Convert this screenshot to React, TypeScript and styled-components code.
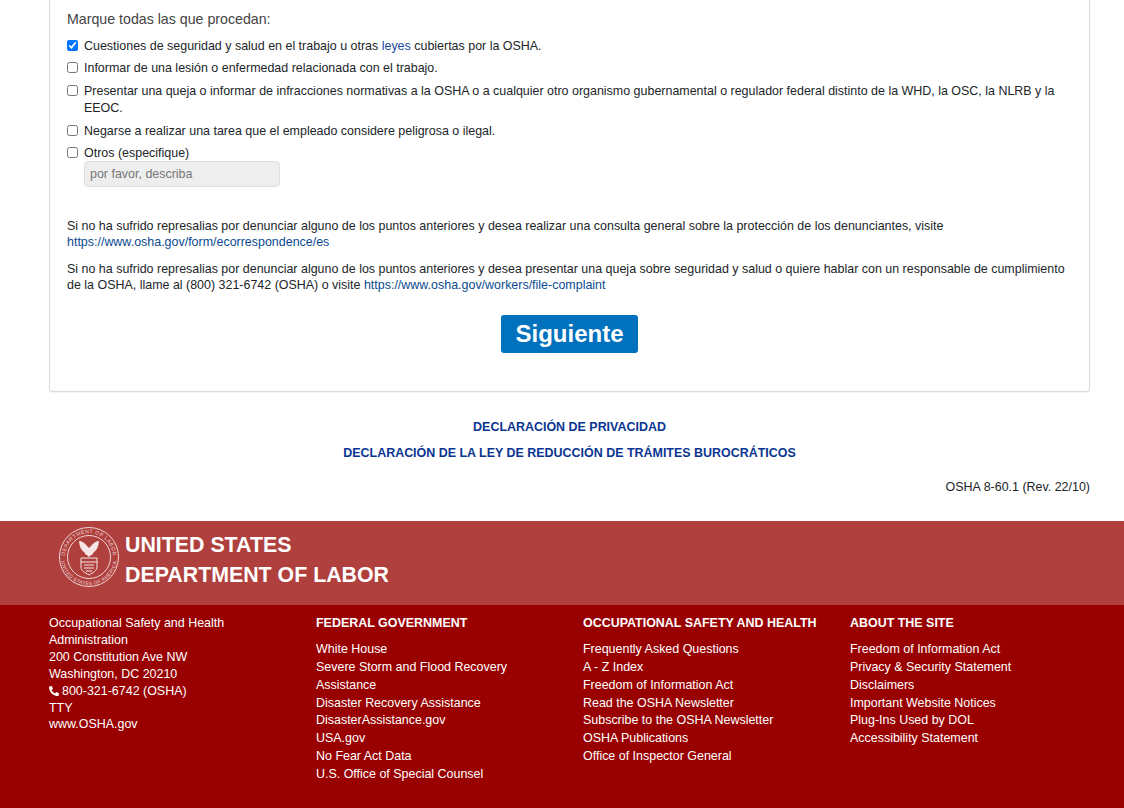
import React from "react";
import styled, { createGlobalStyle } from "styled-components";
import { FaPhoneAlt } from "react-icons/fa";

const Global = createGlobalStyle`
  html, body { margin: 0; padding: 0; background: #fff; }
  body { font-family: "Liberation Sans", Arial, sans-serif; font-size: 12.46px; line-height: 18px; color: #212529; }
  * { box-sizing: border-box; }
`;

const Page = styled.div`
  width: 1124px;
  height: 808px;
  overflow: hidden;
  display: flex;
  flex-direction: column;
`;
const Main = styled.main`
  height: 521px;
  padding: 0 34px 0 49px;
`;
const Card = styled.section`
  height: 392px;
  border: 1px solid #d9d9d9;
  border-top: 0;
  border-radius: 0 0 4px 4px;
  padding: 10px 17px 0 17px;
  box-shadow: 0 1px 1px rgba(0,0,0,.05);
`;
const Legend = styled.div`
  font-size: 14.2px;
  line-height: 18px;
  color: #444;
  margin-bottom: 9.9px;
`;
const CheckRow = styled.label`
  display: flex;
  align-items: flex-start;
  gap: 6px;
  line-height: 17.8px;
  margin-bottom: 4.55px;
`;
const Box = styled.input.attrs({ type: "checkbox", readOnly: true })`
  width: 11px;
  height: 11px;
  margin: 2.1px 0 0 0;
  flex: none;
  accent-color: #0075ff;
`;
const Blue = styled.span`
  color: #1a4a9c;
`;
const Describe = styled.input.attrs({ disabled: true, placeholder: "por favor, describa" })`
  display: block;
  width: 196px;
  height: 26px;
  margin: -6.450px 0 0 17px;
  padding: 0 5px;
  border: 1px solid #ddd;
  border-radius: 4px;
  background: #eee;
  font: 12.46px "Liberation Sans", Arial, sans-serif;
  &::placeholder { color: #777; opacity: 1; }
`;
const Notes = styled.div`
  margin-top: 30.8px;
  line-height: 16.4px;
`;
const Note = styled.p`
  margin: 0 0 10.2px;
`;
const Link = styled.a`
  color: #0b4a8f;
  text-decoration: none;
`;
const ButtonRow = styled.div`
  display: flex;
  justify-content: center;
  margin-top: 21.6px;
`;
const NextButton = styled.button`
  width: 137px;
  height: 38px;
  border: 0;
  border-radius: 3px;
  background: #0071bc;
  color: #fff;
  font: bold 24px "Liberation Sans", Arial, sans-serif;
  padding: 0;
`;
const Declarations = styled.nav`
  display: flex;
  flex-direction: column;
  align-items: center;
  gap: 8px;
  margin-top: 26px;
`;
const Declaration = styled.a`
  font-size: 12.46px;
  font-weight: bold;
  color: #0a3592;
`;
const Revision = styled.div`
  text-align: right;
  margin-top: 16px;
  font-size: 12.46px;
`;
const Brand = styled.div`
  height: 84px;
  background: #af403e;
  display: flex;
  align-items: flex-start;
  padding: 5px 0 0 58px;
  gap: 5px;
`;
const BrandName = styled.div`
  color: #fff;
  font-size: 21.35px;
  font-weight: bold;
  line-height: 30px;
  margin-top: 3.5px;
`;
const Footer = styled.footer`
  flex: 1;
  background: #990000;
  color: #fff;
  display: grid;
  grid-template-columns: 267px 267px 267px 1fr;
  padding: 9px 0 0 49px;
`;
const Address = styled.div`
  line-height: 16.9px;
  padding: 1px 60px 0 0;
`;
const FooterTitle = styled.h3`
  margin: 0 0 9px;
  font-size: 12.46px;
  line-height: 18px;
  font-weight: bold;
  text-transform: uppercase;
`;
const FooterList = styled.ul`
  list-style: none;
  margin: 0;
  padding: 0 30px 0 0;
  line-height: 17.85px;
`;
const PhoneIcon = styled(FaPhoneAlt)`
  width: 10px;
  height: 10px;
  margin-right: 3px;
  color: #fff;
  vertical-align: -1px;
`;

const Seal = () => (
  <svg width="62" height="62" viewBox="0 0 62 62" aria-hidden="true">
    <defs>
      <path id="sealTop" d="M8.640 39.140A23.800 23.800 0 1 1 53.360 39.140" />
      <path id="sealBottom" d="M4.600 21.390A28.100 28.100 0 1 0 57.400 21.390" />
    </defs>
    <g fill="none" stroke="#f0d5d3">
      <circle cx="31" cy="31" r="29.500" strokeWidth="1" />
      <circle cx="31" cy="31" r="21.500" strokeWidth="1" />
    </g>
    <text fontSize="5.200" fill="#f0d5d3" fontFamily="Liberation Sans" letterSpacing=".5">
      <textPath href="#sealTop" startOffset="50%" textAnchor="middle">DEPARTMENT OF LABOR</textPath>
    </text>
    <text fontSize="5" fill="#f0d5d3" fontFamily="Liberation Sans" letterSpacing=".35">
      <textPath href="#sealBottom" startOffset="50%" textAnchor="middle">UNITED STATES OF AMERICA</textPath>
    </text>
    <path d="M21 15c3 0 6 2 8 5l2 2 2-2c2-3 5-5 8-5-.3 5-2 9-5 11l-2 3h-6l-2-3c-3-2-4.700-6-5-11z" fill="#f7e6e5" />
    <path d="M29 29h4l-2 2z" fill="#f7e6e5" />
    <path d="M23 32h16v9c0 4-4 5.500-8 8-4-2.500-8-4-8-8z" fill="none" stroke="#f7e6e5" strokeWidth="1" />
    <path d="M23 36h16M26 39h10M26 42h10M28 45h6" stroke="#f7e6e5" strokeWidth="1" />
  </svg>
);

const federal = ["White House", "Severe Storm and Flood Recovery Assistance", "Disaster Recovery Assistance", "DisasterAssistance.gov", "USA.gov", "No Fear Act Data", "U.S. Office of Special Counsel"];
const osha = ["Frequently Asked Questions", "A - Z Index", "Freedom of Information Act", "Read the OSHA Newsletter", "Subscribe to the OSHA Newsletter", "OSHA Publications", "Office of Inspector General"];
const about = ["Freedom of Information Act", "Privacy & Security Statement", "Disclaimers", "Important Website Notices", "Plug-Ins Used by DOL", "Accessibility Statement"];

const Column = ({ title, items }: { title: string; items: string[] }) => (
  <div>
    <FooterTitle>{title}</FooterTitle>
    <FooterList>
      {items.map((i) => <li key={i}>{i}</li>)}
    </FooterList>
  </div>
);

export default function App() {
  return (
    <Page>
      <Global />
      <Main>
        <Card>
          <Legend>Marque todas las que procedan:</Legend>
          <CheckRow><Box defaultChecked /><span>Cuestiones de seguridad y salud en el trabajo u otras <Blue>leyes</Blue> cubiertas por la OSHA.</span></CheckRow>
          <CheckRow><Box /><span>Informar de una lesión o enfermedad relacionada con el trabajo.</span></CheckRow>
          <CheckRow><Box /><span>Presentar una queja o informar de infracciones normativas a la OSHA o a cualquier otro organismo gubernamental o regulador federal distinto de la WHD, la OSC, la NLRB y la EEOC.</span></CheckRow>
          <CheckRow><Box /><span>Negarse a realizar una tarea que el empleado considere peligrosa o ilegal.</span></CheckRow>
          <CheckRow><Box /><span>Otros (especifique)</span></CheckRow>
          <Describe />
          <Notes>
            <Note>Si no ha sufrido represalias por denunciar alguno de los puntos anteriores y desea realizar una consulta general sobre la protección de los denunciantes, visite <Link>https://www.osha.gov/form/ecorrespondence/es</Link></Note>
            <Note>Si no ha sufrido represalias por denunciar alguno de los puntos anteriores y desea presentar una queja sobre seguridad y salud o quiere hablar con un responsable de cumplimiento de la OSHA, llame al (800) 321-6742 (OSHA) o visite <Link>https://www.osha.gov/workers/file-complaint</Link></Note>
          </Notes>
          <ButtonRow><NextButton>Siguiente</NextButton></ButtonRow>
        </Card>
        <Declarations>
          <Declaration>DECLARACIÓN DE PRIVACIDAD</Declaration>
          <Declaration>DECLARACIÓN DE LA LEY DE REDUCCIÓN DE TRÁMITES BUROCRÁTICOS</Declaration>
        </Declarations>
        <Revision>OSHA 8-60.1 (Rev. 22/10)</Revision>
      </Main>
      <Brand>
        <Seal />
        <BrandName>UNITED STATES<br />DEPARTMENT OF LABOR</BrandName>
      </Brand>
      <Footer>
        <Address>
          Occupational Safety and Health Administration<br />
          200 Constitution Ave NW<br />
          Washington, DC 20210<br />
          <PhoneIcon />
          800-321-6742 (OSHA)<br />
          TTY<br />
          www.OSHA.gov
        </Address>
        <Column title="Federal Government" items={federal} />
        <Column title="Occupational Safety and Health" items={osha} />
        <Column title="About the Site" items={about} />
      </Footer>
    </Page>
  );
}
